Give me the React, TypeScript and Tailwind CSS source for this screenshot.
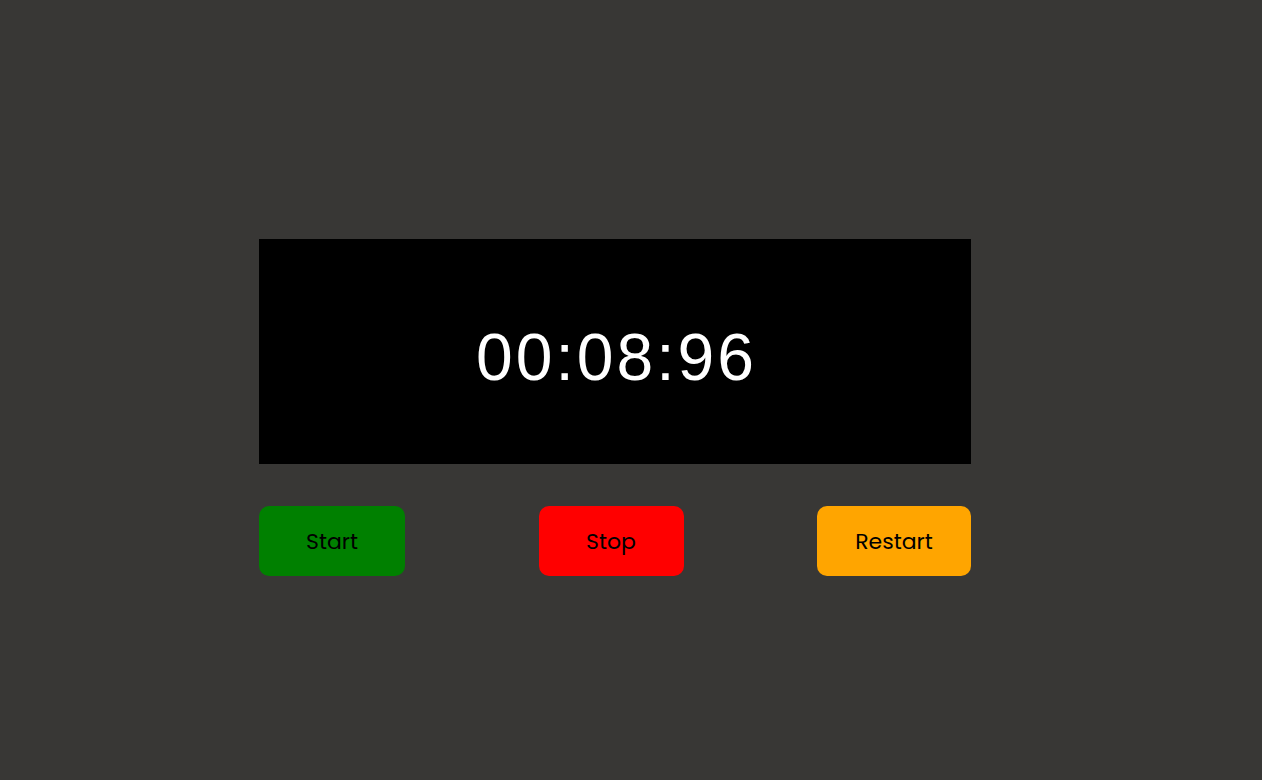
const buttons = [
  { label: 'Start', cls: 'bg-[#008000] w-[146px]' },
  { label: 'Stop', cls: 'bg-[#ff0000] w-[145px]' },
  { label: 'Restart', cls: 'bg-[#ffa500] w-[154px]' },
];

const App = () => {
  return (
    <div className="min-h-[780px] bg-[#383735] pt-[239px] pl-[259px] font-['Poppins','Liberation_Sans',sans-serif]">
      <div className="w-[712px] flex flex-col gap-[42px]">
        <div className="h-[225px] bg-black flex items-center justify-center">
          <span className="text-white text-[66px] tracking-[3px] leading-none font-['Liberation_Sans',sans-serif] pl-[3px] pt-[10px]">
            00:08:96
          </span>
        </div>
        <div className="flex justify-between">
          {buttons.map((b) => (
            <div
              key={b.label}
              className={`${b.cls} h-[70px] rounded-[10px] flex items-center justify-center text-black text-[22px]`}
            >
              {b.label}
            </div>
          ))}
        </div>
      </div>
    </div>
  );
};

export default App;
